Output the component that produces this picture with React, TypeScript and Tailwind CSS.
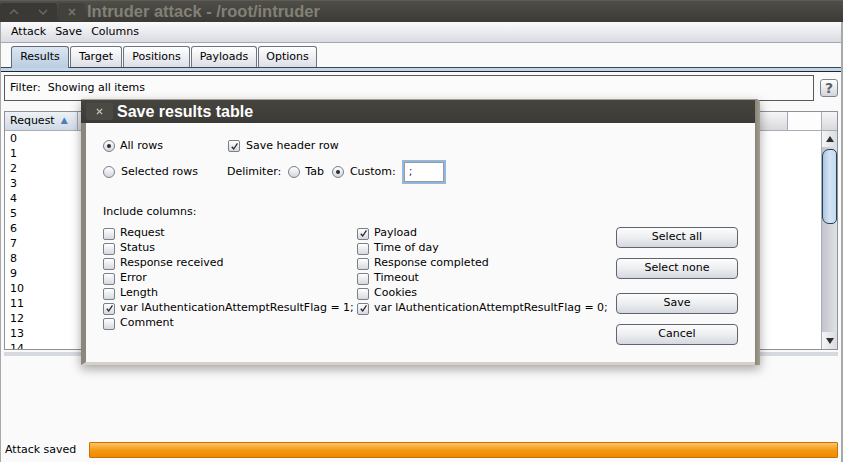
import React from 'react';

function CheckBox({ checked }: { checked?: boolean }) {
  return (
    <span className="inline-flex h-[12px] w-[12px] shrink-0 items-center justify-center rounded-[2px] border border-[#7a7f88] bg-gradient-to-b from-white to-[#d6d9df]">
      {checked && (
        <svg viewBox="0 0 10 10" className="h-[9px] w-[9px]">
          <path d="M2 5.3 L4.1 7.8 L8.3 1.6" fill="none" stroke="#262626" strokeWidth="1.4" />
        </svg>
      )}
    </span>
  );
}

function Radio({ checked }: { checked?: boolean }) {
  return (
    <span className="inline-flex h-[12px] w-[12px] shrink-0 items-center justify-center rounded-full border border-[#7a7f88] bg-gradient-to-b from-white to-[#d3d6dc]">
      {checked && <span className="h-[4px] w-[4px] rounded-full bg-[#2c2c2c]" />}
    </span>
  );
}

function Button({ label }: { label: string }) {
  return (
    <div className="flex h-[21px] items-center justify-center rounded-[4px] border border-[#5f646d] bg-gradient-to-b from-[#fdfdfd] via-[#eceef1] to-[#d5d8de] text-[11px]">
      {label}
    </div>
  );
}

const tabs = [
  { label: 'Results', w: 'w-[58px]' },
  { label: 'Target', w: 'w-[52px]' },
  { label: 'Positions', w: 'w-[67px]' },
  { label: 'Payloads', w: 'w-[66px]' },
  { label: 'Options', w: 'w-[59px]' },
];

const leftCols = [
  { label: 'Request' },
  { label: 'Status' },
  { label: 'Response received' },
  { label: 'Error' },
  { label: 'Length' },
  { label: 'var lAuthenticationAttemptResultFlag = 1;', checked: true },
  { label: 'Comment' },
];

const rightCols = [
  { label: 'Payload', checked: true },
  { label: 'Time of day' },
  { label: 'Response completed' },
  { label: 'Timeout' },
  { label: 'Cookies' },
  { label: 'var lAuthenticationAttemptResultFlag = 0;', checked: true },
];

export default function App() {
  return (
    <div className="relative flex h-[462px] w-[843px] flex-col overflow-hidden bg-[#fafafa] font-['DejaVu_Sans',sans-serif] text-[11px] text-black">
      {/* window title bar */}
      <div className="flex h-[22px] shrink-0 items-center border-t border-[#5e5c56] bg-gradient-to-b from-[#4f4e49] to-[#3b3a36]">
        <div className="flex h-[18px] w-[57px] items-center justify-around rounded-[3px] bg-[#3a3935]">
          <svg viewBox="0 0 10 6" className="h-[6px] w-[10px]">
            <path d="M1 5 L5 1 L9 5" fill="none" stroke="#6f6d66" strokeWidth="1.3" />
          </svg>
          <svg viewBox="0 0 10 6" className="h-[6px] w-[10px]">
            <path d="M1 1 L5 5 L9 1" fill="none" stroke="#6f6d66" strokeWidth="1.3" />
          </svg>
        </div>
        <div className="ml-[1px] flex h-[18px] w-[27px] items-center justify-center rounded-[3px] bg-[#42413c]">
          <svg viewBox="0 0 8 8" className="h-[8px] w-[8px]">
            <path d="M1 1 L7 7 M7 1 L1 7" stroke="#77756e" strokeWidth="1.6" />
          </svg>
        </div>
        <div className="ml-[2px] font-['Liberation_Sans',sans-serif] text-[16.5px] font-bold text-[#838076]">
          Intruder attack - /root/intruder
        </div>
      </div>

      <div className="flex flex-1 flex-col border-l border-r-2 border-[#a8a8a8]">
        {/* menu bar */}
        <div className="flex h-[21px] shrink-0 items-center gap-[9px] border-b border-[#a3a6b6] bg-gradient-to-b from-[#fbfbfc] to-[#d9dbe1] pl-[10px]">
          <span>Attack</span>
          <span>Save</span>
          <span>Columns</span>
        </div>

        {/* tabs */}
        <div className="flex h-[24px] shrink-0 items-end pl-[10px]">
          {tabs.map((t, i) => (
            <div
              key={t.label}
              className={
                i === 0
                  ? `relative z-10 -mb-px flex h-[22px] items-center justify-center rounded-t-[3px] border border-b-0 border-[#5d6b7c] bg-gradient-to-b from-[#dbe6f1] to-[#b9cde1] ${t.w}`
                  : `ml-px flex h-[21px] items-center justify-center rounded-t-[3px] border border-b-0 border-[#6e7480] bg-gradient-to-b from-white to-[#dcdfe5] pt-[1px] ${t.w}`
              }
            >
              {t.label}
            </div>
          ))}
        </div>
        <div className="h-[5px] shrink-0 border-y border-t-[#3c4654] border-b-[#1e2631] bg-[#c3d5e7]" />

        <div className="flex flex-1 flex-col px-[3px]">
          {/* filter */}
          <div className="mt-[3px] flex h-[26px] shrink-0 items-center gap-[6px]">
            <div className="flex h-[26px] flex-1 items-center border border-[#585858] bg-[#fbfbfb] pl-[5px]">
              Filter:&nbsp; Showing all items
            </div>
            <div className="flex h-[18px] w-[18px] items-center justify-center rounded-[3px] border border-[#7f838b] bg-gradient-to-b from-white to-[#d2d5db] text-[14px] font-bold text-[#5e6168]">
              ?
            </div>
          </div>

          {/* results table */}
          <div className="mt-[10px] flex h-[239px] shrink-0 border border-[#8d9199] bg-white">
            <div className="flex flex-1 flex-col">
              <div className="flex h-[19px] shrink-0 border-b border-[#a9adb5]">
                <div className="flex w-[73px] items-center border-r border-[#a3a8b1] bg-gradient-to-b from-[#eef2f7] to-[#cfd9e5] pl-[5px]">
                  Request
                  <span className="ml-[6px] text-[9px] text-[#4b7fb6]">▲</span>
                </div>
                <div className="flex-1 border-r border-[#a3a8b1] bg-gradient-to-b from-[#f6f6f7] to-[#d8d9dd]" />
                <div className="w-[33px] bg-[#fdfdfd]" />
              </div>
              <div className="flex flex-col overflow-hidden pl-[5px] pt-[1px]">
                {Array.from({ length: 15 }, (_, i) => (
                  <div key={i} className="flex h-[15px] shrink-0 items-center">
                    {i}
                  </div>
                ))}
              </div>
            </div>
            {/* scrollbar */}
            <div className="flex w-[16px] flex-col border-l border-[#a9adb5]">
              <div className="h-[19px] shrink-0 border-b border-[#a9adb5] bg-gradient-to-b from-[#f6f6f7] to-[#d8d9dd]" />
              <div className="flex h-[16px] shrink-0 items-center justify-center bg-gradient-to-r from-[#f4f5f7] to-[#dadce1]">
                <svg viewBox="0 0 8 6" className="h-[6px] w-[8px]">
                  <path d="M0 6 L4 0 L8 6 Z" fill="#2f2f2f" />
                </svg>
              </div>
              <div className="flex flex-1 flex-col bg-gradient-to-r from-[#c2c5cc] to-[#dfe1e5]">
                <div className="mt-[2px] h-[75px] rounded-l-[7px] rounded-r-[5px] border border-[#2c3d52] bg-gradient-to-r from-[#a9c6e2] via-[#d3e4f4] to-[#c4daef]" />
              </div>
              <div className="flex h-[17px] shrink-0 items-center justify-center bg-gradient-to-r from-[#f4f5f7] to-[#dadce1]">
                <svg viewBox="0 0 8 6" className="h-[6px] w-[8px]">
                  <path d="M0 0 L8 0 L4 6 Z" fill="#2f2f2f" />
                </svg>
              </div>
            </div>
          </div>
          <div className="mt-[2px] h-[4px] shrink-0 bg-[#d6d9de]" />

          <div className="flex-1" />

          {/* status bar */}
          <div className="mb-[4px] flex h-[16px] shrink-0 items-center">
            <div className="w-[85px] pl-[1px]">Attack saved</div>
            <div className="h-[16px] flex-1 rounded-[1px] border border-[#cf6f00] bg-gradient-to-b from-[#fcc561] via-[#f39a10] to-[#ee8a00]" />
          </div>
        </div>
      </div>

      {/* Save results table dialog */}
      <div className="absolute left-[81px] top-[99px] flex h-[266px] w-[679px] shadow-[0_4px_10px_rgba(0,0,0,0.35)]">
        <div className="flex flex-1 flex-col border-t border-[#a39d92]">
          <div className="flex h-[23px] shrink-0 items-center bg-gradient-to-b from-[#46453f] to-[#3b3a36]">
            <div className="ml-[5px] flex h-[17px] w-[27px] items-center justify-center rounded-[2px] bg-[#4a4943]">
              <svg viewBox="0 0 8 8" className="h-[7px] w-[7px]">
                <path d="M1 1 L7 7 M7 1 L1 7" stroke="#c9c6bd" strokeWidth="1.5" />
              </svg>
            </div>
            <div className="ml-[4px] font-['Liberation_Sans',sans-serif] text-[16px] font-bold text-white">
              Save results table
            </div>
          </div>
          <div className="flex flex-1 border-b-[3px] border-l-[5px] border-b-[#d5d1c9] border-l-[#8d867a] bg-[#fafafa]">
            <div className="flex flex-1 flex-col pl-[17px] pt-[15px]">
              <div className="flex h-[16px] items-center">
                <div className="flex w-[125px] items-center gap-[5px]">
                  <Radio checked />
                  <span>All rows</span>
                </div>
                <div className="flex items-center gap-[6px]">
                  <CheckBox checked />
                  <span>Save header row</span>
                </div>
              </div>
              <div className="mt-[6px] flex h-[24px] items-center">
                <div className="flex w-[124px] items-center gap-[6px]">
                  <Radio />
                  <span>Selected rows</span>
                </div>
                <span>Delimiter:</span>
                <div className="ml-[7px] flex items-center gap-[5px]">
                  <Radio />
                  <span>Tab</span>
                </div>
                <div className="ml-[8px] flex items-center gap-[6px]">
                  <Radio checked />
                  <span>Custom:</span>
                </div>
                <div className="ml-[6px] flex h-[24px] w-[44px] items-center border-2 border-[#93b7de] bg-white">
                  <div className="flex h-full w-full items-center border border-[#9a9a9a] pl-[4px] text-[#4a2050]">
                    ;
                  </div>
                </div>
              </div>
              <div className="mt-[21px] flex h-[14px] items-center">Include columns:</div>
              <div className="mt-[7px] flex">
                <div className="flex w-[254px] flex-col">
                  {leftCols.map((c) => (
                    <div key={c.label} className="flex h-[15px] items-center gap-[5px] whitespace-nowrap">
                      <CheckBox checked={c.checked} />
                      <span>{c.label}</span>
                    </div>
                  ))}
                </div>
                <div className="flex flex-col">
                  {rightCols.map((c) => (
                    <div key={c.label} className="flex h-[15px] items-center gap-[5px] whitespace-nowrap">
                      <CheckBox checked={c.checked} />
                      <span>{c.label}</span>
                    </div>
                  ))}
                </div>
              </div>
            </div>
            <div className="mr-[17px] flex w-[122px] flex-col pt-[104px]">
              <Button label="Select all" />
              <div className="mt-[10px]">
                <Button label="Select none" />
              </div>
              <div className="mt-[14px]">
                <Button label="Save" />
              </div>
              <div className="mt-[10px]">
                <Button label="Cancel" />
              </div>
            </div>
          </div>
        </div>
        <div className="w-[5px] rounded-tr-[4px] bg-gradient-to-r from-[#8a8377] to-[#a49d91]" />
      </div>
    </div>
  );
}
